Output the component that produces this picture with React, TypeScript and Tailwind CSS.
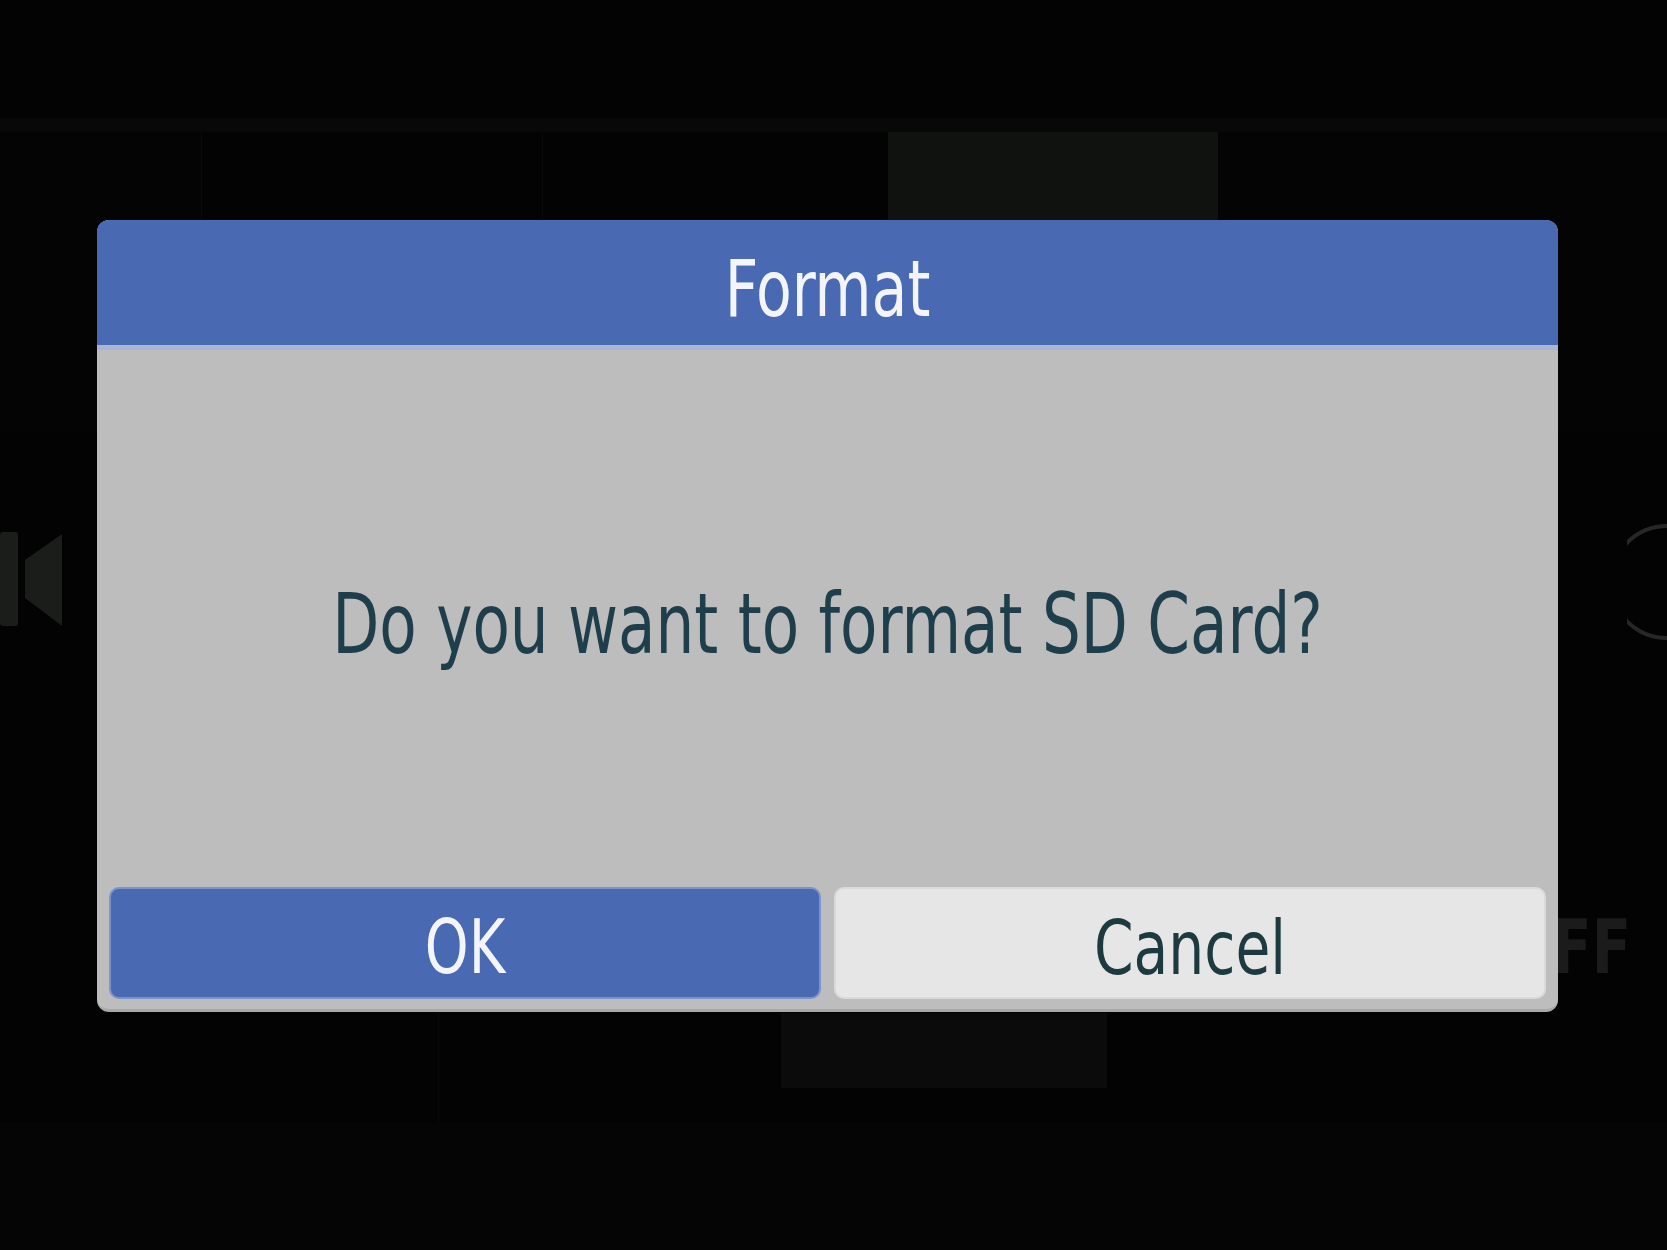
import React from 'react';

const FONT = "font-['DejaVu_Sans_Condensed','DejaVu_Sans',sans-serif] font-stretch-condensed";

function Speaker() {
  return (
    <svg width="64" height="96" viewBox="0 0 64 96" className="block">
      <rect x="0" y="0" width="18" height="94" rx="3" fill="#1b1d1b" />
      <path d="M25 28 L62 2 L62 94 L25 66 Z" fill="#1b1d1b" />
    </svg>
  );
}

function Backdrop() {
  return (
    <div className="flex h-full flex-col">
      <div className="h-[118px]" />
      <div className="h-[14px] bg-[#080808]" />
      <div className="flex h-[300px]">
        <div className="w-[202px] border-r border-[#0a0a0a] bg-[#040404]" />
        <div className="w-[341px] border-r border-[#0a0a0a] bg-[#030303]" />
        <div className="w-[345px] bg-[#030303]" />
        <div className="w-[330px] bg-[#101210]" />
        <div className="flex-1 bg-[#040404]" />
      </div>
      <div className="flex h-[486px] items-start justify-between">
        <div className="pt-[100px]">
          <Speaker />
        </div>
        <svg width="40" height="120" viewBox="0 0 40 120" className="mt-[90px] block">
          <path d="M40 4 A56 56 0 0 0 40 116" fill="none" stroke="#262826" strokeWidth="4" />
        </svg>
      </div>
      <div className="flex h-[95px] justify-end pr-[36px]">
        <span className={`${FONT} inline-block scale-y-[1.18] text-[64px] leading-none font-bold text-[#1b1b1b]`}>OFF</span>
      </div>
      <div className="flex h-[110px]">
        <div className="w-[439px] border-r border-[#080808]" />
        <div className="w-[342px]" />
        <div className="h-[75px] w-[326px] bg-[#0b0b0b]" />
        <div className="flex-1" />
      </div>
      <div className="flex-1 bg-[#050505]" />
    </div>
  );
}

function Dialog() {
  return (
    <div className="flex h-[792px] w-[1461px] flex-col overflow-hidden rounded-[12px] border-b-[3px] border-[#a9a9a9] bg-[#bdbdbd]">
      <div className="flex h-[125px] items-center justify-center bg-[#4a69b3] pt-[12px]">
        <span className={`${FONT} inline-block scale-y-[1.2] text-[65px] leading-none text-[#f3f5fb]`}>
          Format
        </span>
      </div>
      <div className="h-[5px] bg-[#a8b6d6]" />
      <div className="flex flex-1 items-center justify-center pt-[12px]">
        <span className={`${FONT} inline-block scale-y-[1.22] text-[68px] leading-none text-[#1f3e4b]`}>
          Do you want to format SD Card?
        </span>
      </div>
      <div className="flex gap-[13px] px-[12px] pb-[10px]">
        <button className="flex h-[112px] flex-1 items-center justify-center rounded-[10px] border-2 border-[#7d93c9] bg-[#4a69b3] pt-[10px]">
          <span className={`${FONT} inline-block scale-y-[1.2] text-[62px] leading-none text-[#f3f5fb]`}>OK</span>
        </button>
        <button className="flex h-[112px] flex-1 items-center justify-center rounded-[10px] border-2 border-[#dadada] bg-[#e6e6e6] pt-[10px]">
          <span className={`${FONT} inline-block scale-y-[1.2] text-[63px] leading-none text-[#1d3a40]`}>Cancel</span>
        </button>
      </div>
    </div>
  );
}

export default function App() {
  return (
    <div className="relative h-[1250px] w-full overflow-hidden bg-[#030303]">
      <Backdrop />
      <div className="absolute top-[220px] left-[97px]">
        <Dialog />
      </div>
    </div>
  );
}
